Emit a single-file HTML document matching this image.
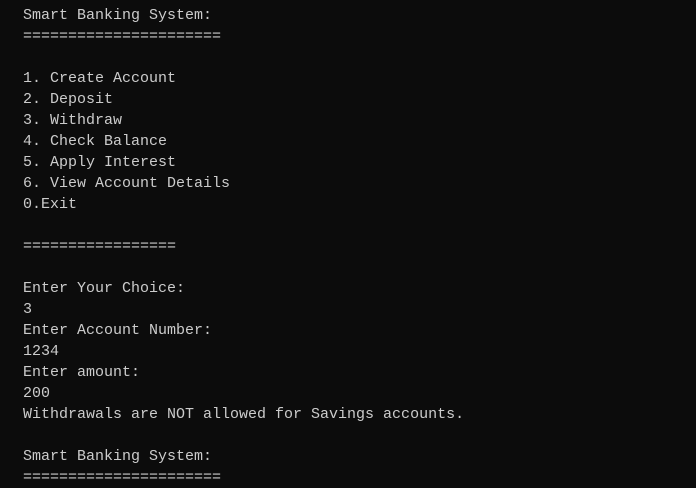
<!DOCTYPE html>
<html><head><style>
html,body{margin:0;padding:0;background:#0c0c0c;width:696px;height:485px;overflow:hidden}
pre{margin:0;position:absolute;left:23px;top:5px;font-family:"Liberation Mono",monospace;font-size:15px;line-height:21px;color:#cccccc}
</style></head><body><pre>Smart Banking System:
======================

1. Create Account
2. Deposit
3. Withdraw
4. Check Balance
5. Apply Interest
6. View Account Details
0.Exit

=================

Enter Your Choice:
3
Enter Account Number:
1234
Enter amount:
200
Withdrawals are NOT allowed for Savings accounts.

Smart Banking System:
======================</pre></body></html>
